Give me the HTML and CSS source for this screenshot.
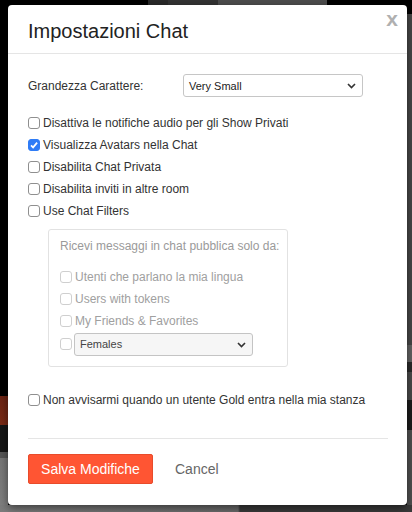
FILE: index.html
```html
<!DOCTYPE html>
<html lang="it">
<head>
<meta charset="utf-8">
<title>Impostazioni Chat</title>
<link rel="stylesheet" href="styles.css">
</head>
<body>
<div class="modal">
  <div class="modal-header">
    <h1 class="title">Impostazioni Chat</h1>
    <span class="close">x</span>
  </div>
  <div class="modal-body">
    <div class="font-row">
      <span class="font-label">Grandezza Carattere:</span>
      <div class="select">
        <span>Very Small</span>
        <svg class="chev" width="9" height="6" viewBox="0 0 9 6"><path d="M1 1 L4.5 4.6 L8 1" fill="none" stroke="#333" stroke-width="1.6"/></svg>
      </div>
    </div>
    <div class="options">
      <label class="opt"><span class="cb"></span>Disattiva le notifiche audio per gli Show Privati</label>
      <label class="opt"><span class="cb checked"><svg width="12" height="12" viewBox="0 0 12 12"><path d="M3 6.3 L5.1 8.4 L9.1 3.6" fill="none" stroke="#fff" stroke-width="1.7"/></svg></span>Visualizza Avatars nella Chat</label>
      <label class="opt"><span class="cb"></span>Disabilita Chat Privata</label>
      <label class="opt"><span class="cb"></span>Disabilita inviti in altre room</label>
      <label class="opt"><span class="cb"></span>Use Chat Filters</label>
    </div>
    <div class="filters">
      <div class="legend">Ricevi messaggi in chat pubblica solo da:</div>
      <label class="opt disabled"><span class="cb"></span>Utenti che parlano la mia lingua</label>
      <label class="opt disabled"><span class="cb"></span>Users with tokens</label>
      <label class="opt disabled"><span class="cb"></span>My Friends &amp; Favorites</label>
      <div class="opt disabled last">
        <span class="cb gap"></span>
        <div class="select small">
          <span>Females</span>
          <svg class="chev" width="9" height="6" viewBox="0 0 9 6"><path d="M1 1 L4.5 4.6 L8 1" fill="none" stroke="#333" stroke-width="1.6"/></svg>
        </div>
      </div>
    </div>
    <label class="opt gold"><span class="cb"></span>Non avvisarmi quando un utente Gold entra nella mia stanza</label>
  </div>
  <div class="modal-footer">
    <button class="btn-primary">Salva Modifiche</button>
    <button class="btn-link">Cancel</button>
  </div>
</div>
</body>
</html>
```
FILE: styles.css
```css
html, body {
  margin: 0;
  height: 512px;
  overflow: hidden;
}
body {
  background-color: #000;
  background-image:
    linear-gradient(to right, #7c7c7c 0, #6a6a6a 238px, #3a3a3a 240px, #3a3a3a 100%),
    linear-gradient(#000 0, #000 396px, #6b2313 396px, #7a2a15 425px, #161616 425px, #161616 452px, #555 452px, #555 458px, #767676 458px, #808080 512px),
    linear-gradient(#000 0, #000 14px, #474747 14px, #474747 345px, #626262 345px, #626262 362px, #2a2a2a 362px, #2a2a2a 372px, #4a4a4a 372px, #4a4a4a 400px, #1c1c1c 400px, #1c1c1c 430px, #505050 430px),
    linear-gradient(to right, #000 0, #000 148px, #2a2a2a 148px, #2a2a2a 168px, #333 168px, #333 218px, #4d4d4d 218px, #4d4d4d 327px, #000 327px);
  background-repeat: no-repeat;
  background-position: 0 505px, 0 0, 407px 0, 0 0;
  background-size: 100% 7px, 8px 512px, 5px 512px, 100% 5px;
  font-family: "Liberation Sans", Arial, sans-serif;
}
.modal {
  position: relative;
  width: 399px;
  height: 500px;
  margin: 5px 0 0 8px;
  background: #fff;
  border-radius: 4px;
  box-shadow: 0 3px 9px rgba(0, 0, 0, 0.5);
  color: #333;
  display: flex;
  flex-direction: column;
}
.modal-header {
  position: relative;
  padding: 15px 20px 11px 20px;
  border-bottom: 1px solid #e5e5e5;
}
.title {
  margin: 0;
  font-size: 20px;
  font-weight: normal;
  line-height: 22px;
  color: #222;
}
.close {
  position: absolute;
  top: 3px;
  right: 9px;
  font-size: 21px;
  line-height: 21px;
  font-weight: bold;
  color: #b0b0b0;
}
.modal-body {
  padding: 20px 20px 27px 20px;
}
.font-row {
  display: flex;
  align-items: center;
  height: 23px;
}
.font-label {
  width: 155px;
  font-size: 12px;
}
.select {
  position: relative;
  box-sizing: border-box;
  width: 180px;
  height: 23px;
  border: 1px solid #c6c6c6;
  border-radius: 3px;
  background: #fff;
  padding-left: 5px;
  font-size: 11px;
  color: #222;
  display: flex;
  align-items: center;
}
.select.small {
  width: 179px;
  background: #f6f6f6;
  border-color: #c4c4c4;
  color: #444;
}
.chev {
  position: absolute;
  right: 6px;
  top: 8px;
}
.options {
  margin-top: 15px;
}
.opt {
  display: flex;
  align-items: center;
  height: 22px;
  font-size: 12px;
  color: #333;
  white-space: nowrap;
}
.cb {
  box-sizing: border-box;
  flex: none;
  width: 12px;
  height: 12px;
  margin-right: 3px;
  border: 1px solid #8f8f8f;
  border-radius: 3px;
  background: #fff;
  display: flex;
}
.cb svg {
  margin: -1px;
}
.cb.checked {
  background: #2f7cf6;
  border-color: #2f7cf6;
}
.filters {
  box-sizing: border-box;
  width: 240px;
  margin: 7px 0 0 20px;
  padding: 9px 4px 10px 11px;
  border: 1px solid #e2e2e2;
  border-radius: 3px;
}
.legend {
  font-size: 12px;
  line-height: 14px;
  color: #9a9a9a;
  margin-bottom: 13px;
  white-space: nowrap;
}
.opt.disabled {
  color: #a0a0a0;
}
.opt.disabled .cb {
  border-color: #cfcfcf;
}
.opt.last {
  height: 24px;
}
.cb.gap {
  margin-right: 2px;
}
.gold {
  margin-top: 22px;
}
.modal-footer {
  margin: 0 19px 0 20px;
  border-top: 1px solid #e5e5e5;
  padding: 15px 0 21px 0;
  display: flex;
  align-items: center;
}
.btn-primary {
  box-sizing: border-box;
  width: 125px;
  height: 30px;
  padding: 0;
  background: #ff5533;
  border: 1px solid #e84b2b;
  border-radius: 2px;
  color: #fff;
  font-family: "Liberation Sans", Arial, sans-serif;
  font-size: 14px;
}
.btn-link {
  margin-left: 22px;
  padding: 0;
  background: none;
  border: none;
  color: #666;
  font-family: "Liberation Sans", Arial, sans-serif;
  font-size: 14px;
}
```
